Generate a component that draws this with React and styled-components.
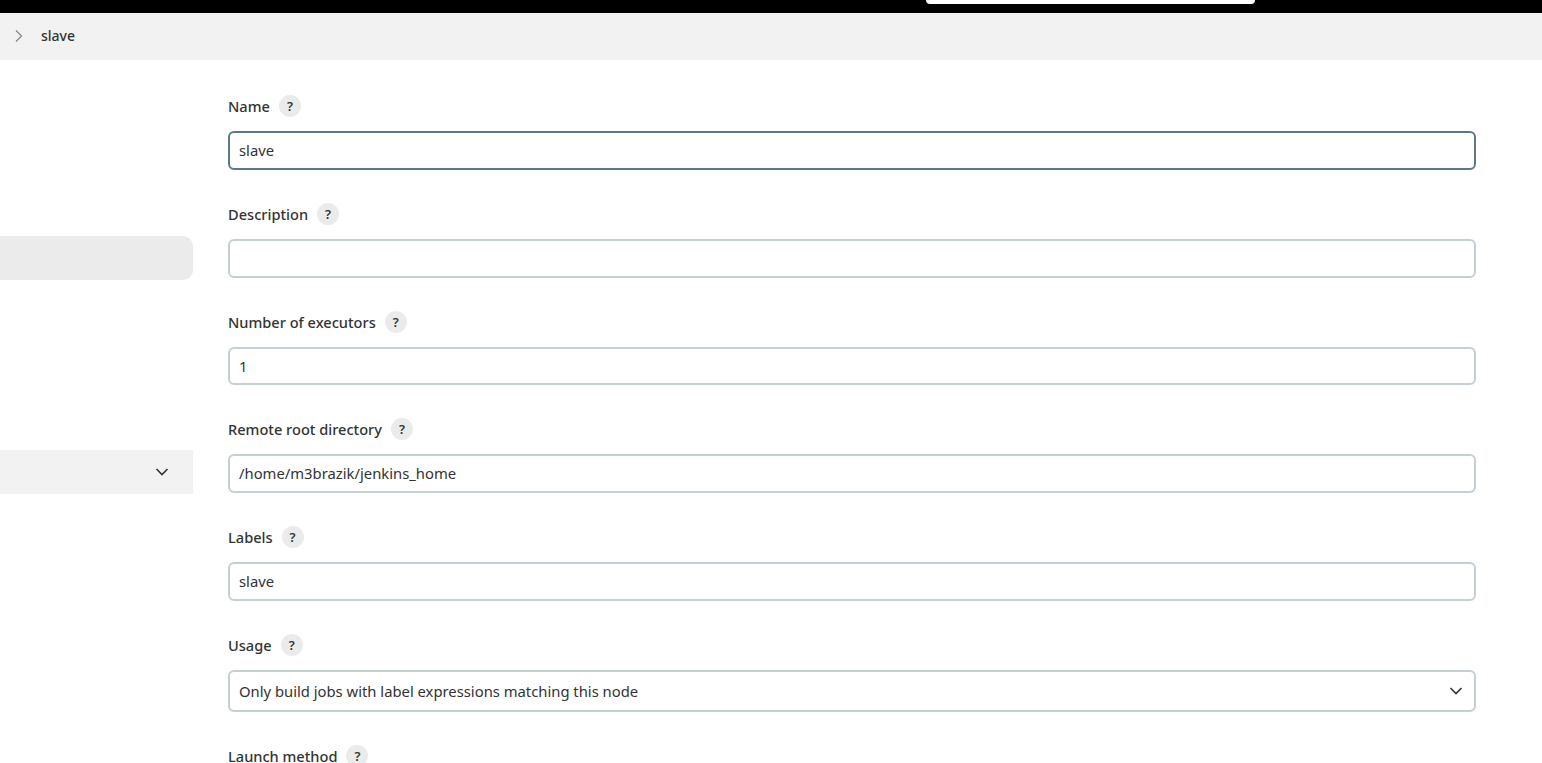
import React from "react";
import styled, { createGlobalStyle } from "styled-components";

const GlobalStyle = createGlobalStyle`
html, body {
  margin: 0;
  height: 100%;
  overflow: hidden;
  background: #fff;
}
body {
  font-family: "Noto Sans", "Open Sans", sans-serif;
  color: #333;
}
`

const TopBar = styled.header`
display: flex;
justify-content: flex-end;
align-items: flex-start;
height: 13px;
padding-right: 287px;
background: #000;
`

const SearchEdge = styled.div`
width: 329px;
height: 4px;
background: #fff;
border-radius: 0 0 6px 6px;
`

const Breadcrumb = styled.nav`
box-sizing: border-box;
display: flex;
align-items: center;
height: 47px;
padding: 0 0 1px 14px;
gap: 17px;
background: #f2f2f2;
`

const CrumbName = styled.span`
margin-bottom: 2px;
font-size: 14px;
font-weight: 500;
color: #333;
`

const Page = styled.div`
display: flex;
gap: 35px;
`

const Sidebar = styled.aside`
flex: 0 0 193px;
padding-top: 176px;
`

const ActiveItem = styled.div`
height: 44px;
background: #ebebeb;
border-radius: 0 10px 10px 0;
`

const GroupItem = styled.div`
display: flex;
align-items: center;
justify-content: flex-end;
height: 44px;
margin-top: 170px;
padding-right: 24px;
background: #f2f2f2;
color: #333;
`

const Form = styled.form`
flex: 1;
display: flex;
flex-direction: column;
gap: 33px;
padding: 35.2px 66px 0 0;
`

const Field = styled.div`
display: flex;
flex-direction: column;
gap: 14px;
`

const LabelRow = styled.div`
display: flex;
align-items: center;
gap: 9px;
height: 22px;
`

const Label = styled.label`
font-size: 14.6px;
font-weight: 500;
color: #333;
`

const Help = styled.span`
display: flex;
align-items: center;
justify-content: center;
width: 22px;
height: 22px;
border-radius: 50%;
background: #ebebeb;
font-size: 13px;
font-weight: 600;
color: #333;
`

const Input = styled.input`
box-sizing: border-box;
width: 100%;
height: 38.75px;
padding: 0 9px 1px;
border: 2px solid ${(p) => (p.$focused ? "#5d7885" : "#c3cfd2")};
border-radius: 6px;
background: #fff;
outline: none;
font-family: inherit;
font-size: 14.8px;
color: #333;
`

const SelectWrap = styled.div`
position: relative;
`

const Select = styled.select`
display: block;
box-sizing: border-box;
width: 100%;
height: 42px;
padding: 0 40px 0 9px;
border: 2px solid #c3cfd2;
border-radius: 6px;
background: #fff;
appearance: none;
outline: none;
font-family: inherit;
font-size: 14.8px;
color: #333;
`

const SelectArrow = styled.svg`
position: absolute;
top: 15px;
right: 13px;
width: 14px;
height: 12px;
pointer-events: none;
`

const Chevron = styled.svg`
display: block;
`

const fields = [
  { name: "Name", value: "slave", focused: true },
  { name: "Description", value: "" },
  { name: "Number of executors", value: "1" },
  { name: "Remote root directory", value: "/home/m3brazik/jenkins_home" },
  { name: "Labels", value: "slave" },
];

const FieldLabel = ({ children }) => (
  <LabelRow>
    <Label>{children}</Label>
    <Help>?</Help>
  </LabelRow>
);

const App = () => {
  return (
    <>
      <GlobalStyle />
      <TopBar>
        <SearchEdge />
      </TopBar>
      <Breadcrumb>
        <Chevron width="10" height="14" viewBox="0 0 10 14" fill="none" stroke="#8a8a8a" strokeWidth="1.3">
          <path d="M2 1.5 L7.5 7 L2 12.5" />
        </Chevron>
        <CrumbName>slave</CrumbName>
      </Breadcrumb>
      <Page>
        <Sidebar>
          <ActiveItem />
          <GroupItem>
            <Chevron width="14" height="10" viewBox="0 0 14 10" fill="none" stroke="#333" strokeWidth="1.6">
              <path d="M1.5 2 L7 7.5 L12.5 2" />
            </Chevron>
          </GroupItem>
        </Sidebar>
        <Form>
          {fields.map((f) => (
            <Field key={f.name}>
              <FieldLabel>{f.name}</FieldLabel>
              <Input $focused={f.focused} defaultValue={f.value} />
            </Field>
          ))}
          <Field>
            <FieldLabel>Usage</FieldLabel>
            <SelectWrap>
              <Select defaultValue="exclusive">
                <option value="normal">Use this node as much as possible</option>
                <option value="exclusive">Only build jobs with label expressions matching this node</option>
              </Select>
              <SelectArrow viewBox="0 0 14 12" fill="none" stroke="#333" strokeWidth="1.6">
                <path d="M1.5 3 L7 8.5 L12.5 3" />
              </SelectArrow>
            </SelectWrap>
          </Field>
          <Field>
            <FieldLabel>Launch method</FieldLabel>
          </Field>
        </Form>
      </Page>
    </>
  );
};

export default App;
